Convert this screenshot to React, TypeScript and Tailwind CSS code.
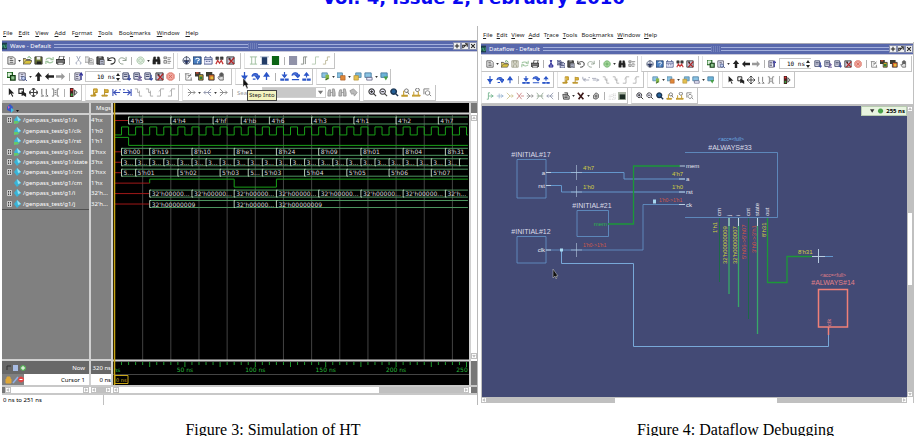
import React from 'react';

const INK = '#222222';
const BLUE = '#2a55c8';

const blueDown = <path d="M5 0v5M2.5 4.5h5L5 8zM4 9h2" fill={BLUE} stroke={BLUE} strokeWidth="1.4" />;

const ICONS: Record<string, React.ReactNode> = {
  doc: <path d="M1 1h6l2 2v6H1zM3 3h3M3 5h4M3 7h4" fill="#eee" stroke="#555" />,
  open: (
    <>
      <path d="M0 9V3h3l1 1h4v2" fill="#e8d36a" stroke="#444" />
      <path d="M0 9l3-4h7L8 9z" fill="#d8c23c" stroke="#555" strokeWidth=".8" />
      <path d="M5 2c2-2 3-1 4 1" fill="none" stroke="#3a8a3a" />
    </>
  ),
  save: (
    <>
      <path d="M1 1h8v8H1z" fill="#6d7a35" stroke="#333" />
      <path d="M3 1h4v3H3z" fill="#eee" />
      <path d="M3 6h5v3H3z" fill="#222" />
    </>
  ),
  saveOff: <path d="M1 1h8v8H1zM3 1h4v3H3zM3 9V6h4v3" fill="#e8e8dc" stroke="#9a9a86" />,
  reload: <path d="M1 4a4 3 0 0 1 7 0M6 4h3V1M9 6a4 3 0 0 1-7 0M4 6H1v3" fill="none" stroke="#9ec49e" strokeWidth="1.3" />,
  print: (
    <>
      <path d="M3 4l1-4h5L8 4" fill="#fff" stroke="#444" />
      <path d="M0 4h10v4H0z" fill="#777" stroke="#222" />
      <path d="M2 7h6v3H2z" fill="#ddd" stroke="#333" strokeWidth=".7" />
    </>
  ),
  cutOff: <path d="M3 0l3 6M7 0L4 6M3.500 6.500a1.300 1.300 0 1 0 0 2.600M6.500 6.500a1.300 1.300 0 1 1 0 2.600" fill="none" stroke="#99a0b4" />,
  cut: <path d="M4 0l2 6M6 0L4 6M4 6a1.500 1.500 0 1 0 0 3zM6 6a1.500 1.500 0 1 1 0 3z" fill="none" stroke="#34349a" strokeWidth="1.3" />,
  copyOff: <path d="M0 1h4l1 1v5H0zM4 3h4l2 2v4H4zM5 5h3M5 7h4" fill="#e6e6e6" stroke="#888" strokeWidth=".8" />,
  copy: <path d="M0 0h4l1 1v5H0zM4 3h4l2 2v5H4zM5 5h3M5 7h4M1 2h3M1 4h3" fill="#d8dcf0" stroke="#333a66" />,
  paste: (
    <>
      <path d="M1 1h7v8H1z" fill="#555" stroke="#222" />
      <path d="M3 0h3v2H3z" fill="#aaa" />
      <path d="M4 4h5v6H4z" fill="#ccd2ea" stroke="#333" strokeWidth=".8" />
      <path d="M5 6h3M5 8h3" stroke="#333" strokeWidth=".7" />
    </>
  ),
  undo: <path d="M1 1v4h4M1 5c2-4 8-4 8 0 0 3-2 4-5 4" fill="none" stroke="#333" strokeWidth="1.2" />,
  redo: <path d="M9 1v4H5M9 5C7 1 1 1 1 5c0 3 2 4 5 4" fill="none" stroke="#8a9a8a" />,
  globeOff: <path d="M5 1a4 4 0 1 0 .1 0M5 3a2 2 0 1 0 .1 0" fill="#e2f0e2" stroke="#a8c4a8" />,
  globe: <path d="M5 1a4 4 0 1 0 .1 0M5 3v4M3 5h4" fill="#a4d69a" stroke="#63a863" />,
  find: <path d="M1 9V5l1-4h2v8zM9 9V5L8 1H6v8zM4 4h2v2H4z" fill={INK} stroke={INK} strokeWidth=".6" />,
  list: <path d="M1 1h3v2H1zM1 5h3v3H1zM5 2h4M5 4h3M5 6h4M5 8h3" fill="#ddd" stroke="#666" strokeWidth=".8" />,
  clock: (
    <>
      <path d="M5 1a4 4 0 1 0 .1 0" fill="#dde3f2" stroke="#44506a" />
      <path d="M5 0v9M2 5l3 4 3-4z" fill="#334a88" stroke="#223" strokeWidth=".6" />
    </>
  ),
  ask: (
    <>
      <path d="M0 1h9v8H0z" fill="#4a7fc0" stroke="#223b66" />
      <path d="M3 4c0-2 4-2 4 0 0 1-2 1-2 2M5 7v1" fill="none" stroke="#fff" strokeWidth="1.2" />
    </>
  ),
  win: <path d="M0 2h9v7H0zM0 4h9M2 6h2M5 6h2M2 0v2M7 0v2" fill="#eef" stroke="#4c5a8c" />,
  tree: (
    <>
      <path d="M1 1h3v3H1zM6 1h3v3H6z" fill="#444" stroke="#222" strokeWidth=".6" />
      <path d="M1 9l2-4 2 3 2-3 2 4" fill="none" stroke="#c43838" strokeWidth="1.4" />
    </>
  ),
  docX: (
    <>
      <path d="M1 1h8v8H1z" fill="#c6c6d8" stroke="#333" />
      <path d="M3 3l6 6M9 2L3 9" stroke="#b02424" strokeWidth="1.500" />
      <path d="M2 2h3v3" fill="#333" />
    </>
  ),
  beam: <path d="M1 1h8M1 9h8M3 1v8M7 1v8" fill="none" stroke="#9cbc9c" />,
  navy: (
    <>
      <path d="M2 1h6v9H2z" fill="#223c66" />
      <path d="M0 1h10M0 9.500h10" stroke="#8a9cb8" strokeWidth=".8" />
    </>
  ),
  green: <path d="M1 0h8v10H1z" fill="#0c6414" />,
  block: <path d="M0 0h9v10H0z" fill="#9092a8" />,
  edge1: <path d="M1 9h3V1h4M6 1v8" fill="none" stroke="#848a84" />,
  edge2: <path d="M1 9h4V1h4" fill="none" stroke="#b4c8b0" />,
  edge3: <path d="M1 9h3V5h2V1h3" fill="none" stroke="#bcb898" />,
  dual: (
    <>
      <path d="M0 0h6v6H0z" fill="#d8f0d8" stroke="#186018" strokeWidth="1.4" />
      <path d="M4 4h5v5H4z" fill="#8ec48e" stroke="#143c14" strokeWidth="1.4" />
    </>
  ),
  docFind: (
    <>
      <path d="M1 1h7v8H1zM3 3h3M3 5h3" fill="#eef" stroke="#556" />
      <path d="M6 5a2 2 0 1 0 .1 0M8 8l2 2" fill="#c8d4f0" stroke="#3a4c88" />
    </>
  ),
  up: <path d="M5 0L1 5h2.500v5h3V5H9z" fill={INK} />,
  left: <path d="M0 5l4-4v2.500h6v3H4V9z" fill={INK} />,
  right: <path d="M10 5L6 1v2.500H0v3h6V9z" fill="#999" />,
  docUp: (
    <>
      <path d="M1 1h6v8H1zM2 3h3M2 5h3M2 7h3" fill="#eef" stroke="#556" />
      <path d="M8 9V2M6 4l2-3 2 3" fill="none" stroke="#34349a" strokeWidth="1.2" />
    </>
  ),
  run: (
    <>
      <path d="M1 1h6v7H1zM2 3h4M2 5h4" fill="#e6e6f2" stroke="#444c6c" strokeWidth="1.1" />
      <path d="M8 3v6M6 7l2 2 2-2" fill="none" stroke="#3044a0" strokeWidth="1.2" />
    </>
  ),
  runAll: (
    <>
      <path d="M1 1h6v7H1zM2 3h4M2 5h4" fill="#e6e6f2" stroke="#444c6c" strokeWidth="1.1" />
      <path d="M5 9h5M8 4v4M6 6h4" fill="none" stroke="#7060a0" strokeWidth="1.2" />
    </>
  ),
  stop: <path d="M3 1h4l2 2v4L7 9H3L1 7V3zM3 3l4 4M7 3L3 7" fill="#f0a8a0" stroke="#d86858" />,
  prof: <path d="M1 2h5M2 2v7h7M4 7l4-5M4 4h4M8 6v3" fill="none" stroke="#777" />,
  mem: (
    <>
      <path d="M0 0h6v5H0z" fill="#3c3c30" />
      <path d="M4 3h5v6H4z" fill="#d0a828" stroke="#333" />
      <path d="M5 5h3v3H5z" fill="#2c7a3c" />
      <path d="M1 1h3" stroke="#e0503a" strokeWidth="1.4" />
    </>
  ),
  memRed: (
    <>
      <path d="M0 0h7v5H0z" fill="#3c3c30" />
      <path d="M3 3h6v6H3z" fill="#d86828" stroke="#333" />
      <path d="M5 5h3v3H5z" fill="#e0c040" />
    </>
  ),
  hand: <path d="M3 9L1 6l1-1 1 1V2h1v3V1h1v4V1h1v4V2h1v5L7 9z" fill="#ddd" stroke="#555" strokeWidth=".9" />,
  stepInto: blueDown,
  stepOver: <path d="M1 5c1-4 6-4 7-1M5 4.500h5L7.500 8zM2 8h3" fill={BLUE} fillOpacity=".8" stroke={BLUE} strokeWidth="1.3" />,
  stepOut: <path d="M5 9V4M2.500 4.500h5L5 1z" fill={BLUE} stroke={BLUE} strokeWidth="1.4" />,
  stepIntoC: <path d="M5 0v4M3 3.500h4L5 6zM1 8h3v1H1zM6 8h3v1H6z" fill={BLUE} stroke={BLUE} strokeWidth="1.3" />,
  stepOverC: <path d="M1 4c1-4 6-4 7-1M5 3.500h5L7.500 6zM1 8.500h8" fill="#5c7cd8" stroke={BLUE} strokeWidth="1.3" />,
  stepOutC: <path d="M5 6V3M3 3.500h4L5 1zM1 8h3v1H1zM6 8h3v1H6z" fill={BLUE} stroke={BLUE} strokeWidth="1.3" />,
  layA: (
    <>
      <path d="M1 1h6v5H1z" fill="#8cc4e4" stroke="#5a8ca8" />
      <path d="M5 3h4v5H5z" fill="#88b848" />
      <path d="M5 9l3-2" stroke="#406828" strokeWidth="1.4" />
    </>
  ),
  layB: (
    <>
      <path d="M0 1h6v5H0z" fill="#8cc4e4" stroke="#5a8ca8" />
      <path d="M4 4h5v5H4z" fill="#e08838" stroke="#a85c28" strokeWidth=".7" />
    </>
  ),
  layC: (
    <>
      <path d="M3 1h6v5H3z" fill="#7cb8dc" stroke="#5a8ca8" />
      <path d="M1 4h5v5H1z" fill="#e4c050" stroke="#b08c30" strokeWidth=".7" />
    </>
  ),
  layD: (
    <>
      <path d="M1 1h7v5H1z" fill="#8cc4e4" stroke="#4a7ca0" />
      <path d="M3 6h6v3H3z" fill="#eef" stroke="#557" strokeWidth=".8" />
    </>
  ),
  layE: (
    <>
      <path d="M1 1h7v5H1z" fill="#6cb4d8" stroke="#4a7ca0" />
      <path d="M4 5h5L6.500 9.500z" fill="#48a048" />
    </>
  ),
  pointer: <path d="M2 0v8l2-2 2 4 1-1-2-3h3z" fill={INK} />,
  pick: (
    <>
      <path d="M1 1h5v5H1z" fill="none" stroke={INK} strokeWidth="1.2" />
      <path d="M4 3v6l2-1 3 2V6z" fill={INK} />
    </>
  ),
  pan: <path d="M5 0v10M0 5h10M3 2l2-2 2 2M3 8l2 2 2-2M2 3L0 5l2 2M8 3l2 2-2 2" fill="none" stroke="#444" strokeWidth="1.2" />,
  bars: <path d="M2 1v6M7 1v6M1 9h3M6 9h3M2 7l2 2M7 7l2 2" fill="none" stroke="#666" />,
  span: <path d="M1 1h2v8H1M9 1H7v8h2M4 3h2M4 5h2M4 7h2" fill="none" stroke="#777" />,
  light: (
    <>
      <path d="M1 0h4v10H1z" fill="#4a2020" />
      <path d="M2 1h2v2H2z" fill="#f03030" />
      <path d="M2 6h2v3H2z" fill="#30a040" />
      <path d="M6 2l3 3-3 3z" fill="#ddd" stroke="#333" />
    </>
  ),
  flagA: <path d="M4 1h4v4H5v3h2M1 8h5v1H1zM4 1v7" fill="#e0b83c" stroke="#b89024" strokeWidth="1.1" />,
  flagB: <path d="M4 1v7M4 2h4v3H4M1 8h6v1H1z" fill="#e0b83c" stroke="#b89024" strokeWidth="1.1" />,
  prev: <path d="M1 1v8M2 5h7M5 2L2 5l3 3M8 2h2" fill="none" stroke="#3a50b8" strokeWidth="1.2" />,
  next: <path d="M9 1v8M0 5h8M5 2l3 3-3 3M0 2h2" fill="none" stroke="#3a50b8" strokeWidth="1.2" />,
  prevOff: <path d="M1 1v3h4M2 5h7M4 3L2 5l2 2M8 2h2" fill="none" stroke="#9a9eb0" />,
  nextOff: <path d="M0 3h5M1 5h8M6 3l2 2-2 2" fill="none" stroke="#9a9eb0" />,
  fall: <path d="M1 1h3v4h2v4h3M6 3v3" fill="none" stroke="#aaa" />,
  rise: <path d="M1 9h4V1h4M3 4l2-2" fill="none" stroke="#aaa" />,
  merge: <path d="M1 1l4 4-4 4M1 5h8M7 3l2 2-2 2" fill="none" stroke="#888" />,
  split: <path d="M9 1L5 5l4 4M1 5h8M3 3L1 5l2 2" fill="none" stroke="#8c92a8" />,
  joinG: <path d="M1 9h2V1h2M3 5h6M6 3l3 2-3 2" fill="none" stroke="#6cb088" />,
  joinB: <path d="M1 5h8M4 2v6M6 3l3 2-3 2" fill="none" stroke="#98b4d0" />,
  joinY: <path d="M1 1l4 4-4 4M4 5h5M7 3l2 2-2 2" fill="none" stroke="#ccc088" />,
  joinR: <path d="M1 1l6 8M7 1L1 9M6 5h4" fill="none" stroke="#c87878" />,
  both: <path d="M1 1l3 4-3 4M9 1L6 5l3 4M1 5h8" fill="none" stroke="#8aa08a" />,
  erase: <path d="M1 3h5l3 2v4H2zM3 1h4v3M3 5h4M3 7h4" fill="#ccc" stroke="#333" />,
  cross: <path d="M1 1l7 8M8 1L2 9" stroke="#3c1818" strokeWidth="2" />,
  redraw: <path d="M2 8V4l3-3 3 2v4L5 9zM3 5h4M5 3v5" fill="#ddd" stroke="#444" />,
  grid: <path d="M1 9h8V1M1 6h3M5 3v4M7 2v6M2 4h1" fill="none" stroke="#bbb" strokeDasharray="1 1" />,
  dark: (
    <>
      <path d="M0 0h10v10H0z" fill="#aab4a4" />
      <path d="M2 3h7v6H2z" fill="#1c2c24" />
    </>
  ),
  zoomIn: <path d="M4 1a3 3 0 1 0 .1 0M6 6l3 3M4 2.500v3M2.500 4h3" fill="#eef" stroke="#333" strokeWidth="1.2" />,
  zoomOut: <path d="M4 1a3 3 0 1 0 .1 0M6 6l3 3M2.500 4h3" fill="#eef" stroke="#444" strokeWidth="1.2" />,
  zoomFull: <path d="M4 1a3 3 0 1 0 .1 0M6 6l3 3" fill="#246098" stroke="#1c3450" strokeWidth="1.6" />,
  zoomCur: (
    <>
      <path d="M6 1a2 2 0 1 0 .1 0M7 4l2 3" fill="#fff" stroke="#555" />
      <path d="M3 3v5M1 8h6v1H1z" fill="#e0b83c" stroke="#c09828" strokeWidth="1.2" />
    </>
  ),
  zoomCurs: (
    <>
      <path d="M6 0a2 2 0 1 0 .1 0" fill="#fff" stroke="#555" />
      <path d="M2 4v4M7 4v4M0 8h9v1H0z" fill="#e0b83c" stroke="#c09828" strokeWidth="1.1" />
    </>
  ),
  zoomArea: <path d="M1 1h6M1 1v6M5 3a2.500 2.500 0 1 0 .1 0M7 7l2 2" fill="#fff" stroke="#777" />,
  findOff: <path d="M1 9V5l1-3h2v7zM9 9V5L8 1H6v8zM4 5h2" fill="#bbb" stroke="#888" strokeWidth=".8" />,
  handOff: <path d="M1 3l4-2 4 4-3 4-1-3-2 1z" fill="#bbb" stroke="#999" />,
};

type ToolbarProps = {
  items: string;
  label: string;
  tight?: boolean;
  className?: string;
};

function Tools({ items, tight }: { items: string; tight?: boolean }) {
  return (
    <>
      {items.split(' ').map((name, i) => {
        if (name === '|') {
          return (
            <span key={i} className={`flex shrink-0 justify-center ${tight ? 'w-[6px]' : 'w-[7px]'}`}>
              <span className="h-2 w-px bg-[#b0b0b0]" />
            </span>
          );
        }
        if (name === 'v') {
          return (
            <button key={i} aria-label="More" className="flex w-[5px] shrink-0 items-center justify-center">
              <svg viewBox="0 0 4 3" className="h-[2px] w-[3px]">
                <path d="M0 0h4L2 3z" fill="#333" />
              </svg>
            </button>
          );
        }
        return (
          <button
            key={i}
            aria-label={name}
            className={`flex h-[12px] shrink-0 items-center justify-center ${tight ? 'w-[10px]' : 'w-[11px]'}`}
          >
            <svg viewBox="0 0 10 10" className={tight ? 'size-[8px]' : 'size-[9px]'}>
              {ICONS[name]}
            </svg>
          </button>
        );
      })}
    </>
  );
}

function Group({ label, className, children }: { label: string; className?: string; children: React.ReactNode }) {
  return (
    <div
      role="toolbar"
      aria-label={label}
      className={`flex h-[16px] shrink-0 items-center border-x border-b border-[#c4c4c4] border-l-[#e4e4e4] pl-[3px] ${className ?? ''}`}
    >
      {children}
    </div>
  );
}

function Toolbar({ items, label, tight, className }: ToolbarProps) {
  return (
    <Group label={label} className={className}>
      <Tools items={items} tight={tight} />
    </Group>
  );
}

function RunLength({ tight }: { tight?: boolean }) {
  return (
    <div className={`flex h-[11px] shrink-0 items-center border border-[#c8c8c8] border-r-0 ${tight ? 'mx-[2px] w-[32px]' : 'ml-px w-[36px]'}`}>
      <input
        aria-label="Run length"
        defaultValue="10 ns"
        className="w-full min-w-0 bg-transparent text-right font-['DejaVu_Sans_Mono',monospace] text-[6px] leading-none outline-none"
      />
      <svg viewBox="0 0 6 10" className="h-[10px] w-[6px] shrink-0">
        <path d="M1 4l2-3 2 3zM1 6l2 3 2-3z" fill={INK} />
      </svg>
    </div>
  );
}

function MenuBar({ items, className }: { items: string[]; className: string }) {
  return (
    <nav className={`flex h-[14px] items-center ${className}`}>
      {items.map((item) => {
        // "_" marks the mnemonic letter
        const at = item.indexOf('_');
        return (
          <button key={item} className="leading-[10px] text-[#222]">
            {item.slice(0, at)}
            <span className="underline">{item[at + 1]}</span>
            {item.slice(at + 2)}
          </button>
        );
      })}
    </nav>
  );
}

function TitleBar({ title }: { title: string }) {
  return (
    <div className="flex h-[12px] items-center border-y border-t-[#a8a8b4] border-b-[#c8c8d8] bg-[#5868ac] text-white">
      <svg viewBox="0 0 6 8" className="mr-[3px] h-[8px] w-[5px]">
        <path d="M0 0h6v8H0z" fill="#1c3c4c" />
        <path d="M1 6V3h2v3h2V2" fill="none" stroke="#48b078" />
      </svg>
      <h2 className="mr-[3px] leading-[10px]">{title}</h2>
      <div className="h-[4px] flex-1 border-y border-[#a4b0dc]" />
      <svg viewBox="0 0 10 6" className="h-[6px] w-[10px]">
        <path d="M0 1h10M0 3h10M0 5h10" stroke="#8c98c8" strokeDasharray="1 1" />
      </svg>
      <div className="h-[4px] flex-1 border-y border-[#a4b0dc]" />
      <div className="flex">
        {['M4 1v6M1 4h6', 'M1 7V3h3M2 6l4-4M4 1h3v4', 'M1.500 1.500l5 5M6.500 1.500l-5 5'].map((d, i) => (
          <button key={i} aria-label={['Add', 'Undock', 'Close'][i]} className="border border-[#8890b0] bg-[#f0f0f0]">
            <svg viewBox="0 0 8 8" className="size-[6px]">
              <path d={d} fill="none" stroke="#222" strokeWidth="1.4" />
            </svg>
          </button>
        ))}
      </div>
    </div>
  );
}

const SIGNALS = [
  { name: 'a', value: "4'hx", bus: true },
  { name: 'clk', value: "1'h0" },
  { name: 'rst', value: "1'h1" },
  { name: 'out', value: "8'hxx", bus: true },
  { name: 'state', value: "3'hx", bus: true },
  { name: 'cnt', value: "5'hxx", bus: true },
  { name: 'cm', value: "1'hx" },
  { name: 'i', value: "32'h...", bus: true },
  { name: 'j', value: "32'h...", bus: true },
];

const END = 251;
const x = (ns: number) => 1.5 + ns * 1.408;
const rowY = (row: number) => 17.5 + row * 10.44;

// [row, [start ns, label][]]
const BUSES: [number, [number, string][]][] = [
  [0, [[10, "4'h5"], [40, "4'h4"], [70, "4'hf"], [90, "4'hb"], [110, "4'h6"], [140, "4'h3"], [170, "4'h1"], [200, "4'h2"], [230, "4'h7"]]],
  [3, [[5, "8'h00"], [25, "8'h19"], [55, "8'h10"], [85, "8'he1"], [115, "8'h24"], [145, "8'h09"], [175, "8'h01"], [205, "8'h04"], [235, "8'h31"]]],
  [4, Array.from({ length: 25 }, (_, i): [number, string] => [5 + i * 10, i === 24 ? '' : '3...'])],
  [5, [[5, '5...'], [15, "5'h01"], [45, "5'h02"], [75, "5'h03"], [95, '5...'], [105, "5'h03"], [135, "5'h04"], [165, "5'h05"], [195, "5'h06"], [225, "5'h07"]]],
  [7, [25, 55, 85, 115, 145, 175, 205, 235].map((t): [number, string] => [t, t === 235 ? "32'h..." : "32'h00000..."])],
  [8, [[25, "32'h00000009"], [85, "32'h00000..."], [115, "32'h00000009"]]],
];

function Bus({ row, spans }: { row: number; spans: [number, string][] }) {
  const y = rowY(row);
  const start = x(spans[0][0]);
  return (
    <g>
      <path d={`M1.5 ${y}H${start}`} stroke="#a01818" />
      <path d={`M${start} ${y - 3.5}H${x(END)}M${start} ${y + 3.5}H${x(END)}`} stroke="#4e9660" />
      {spans.map(([t, label]) => (
        <g key={t}>
          <path d={`M${x(t) + 1} ${y - 3.5}h-1v7h1`} fill="none" stroke="#b4ccb8" />
          <text x={x(t) + 2} y={y + 2.5} fill="#d8d8d8" fontSize="6">
            {label}
          </text>
        </g>
      ))}
    </g>
  );
}

function Waves() {
  let clk = `M1.5 ${rowY(1) + 4}`;
  for (let t = 5; t < END; t += 5) {
    clk += `H${x(t)}V${rowY(1) + (t % 10 === 5 ? -4 : 4)}`;
  }
  clk += `H${x(END)}`;
  return (
    <svg className="block h-[282px] w-full bg-black font-['DejaVu_Sans',sans-serif]" fill="none">
      {Array.from({ length: 12 }, (_, i) => (
        <path key={i} d={`M${x(20 * (i + 1))} 12V257`} stroke="#424242" />
      ))}
      <path d="M0 10.500H2000" stroke="#d0d0d0" strokeWidth="2" />
      {BUSES.map(([row, spans]) => (
        <Bus key={row} row={row} spans={spans} />
      ))}
      <path d={clk} stroke="#18a018" />
      <path d={`M1.5 ${rowY(2) - 4}H${x(10)}V${rowY(2) + 4}H${x(END)}`} stroke="#18a018" />
      <path d={`M1.5 ${rowY(6)}H${x(25)}`} stroke="#a01818" />
      <path
        d={`M${x(25)} ${rowY(6)}V${rowY(6) - 4}H${x(85)}V${rowY(6) + 4}H${x(115)}V${rowY(6) - 4}H${x(END)}`}
        stroke="#18a018"
      />
      <path d="M0 257.500H2000" stroke="#d0d0d0" strokeWidth="2" />
      {Array.from({ length: 50 }, (_, i) => (
        <path key={i} d={`M${x(5 * (i + 1))} 259v${(i + 1) % 5 === 0 ? 5 : 3}`} stroke="#1c9a2c" />
      ))}
      <g fill="#28b83c" fontSize="6" textAnchor="middle">
        <text x="4" y="269">ns</text>
        {[50, 100, 150, 200].map((t) => (
          <text key={t} x={x(t)} y="269">{t} ns</text>
        ))}
        <text x="349" y="269">250</text>
      </g>
      <path d="M0 271.500H2000" stroke="#444" />
      <path d="M1.500 0V282" stroke="#c8a414" strokeWidth="1.500" />
      <path d="M2 272.500h13v8H2z" fill="#000" stroke="#c8a414" />
      <text x="3" y="279" fill="#d8b820" fontSize="5">0 ns</text>
    </svg>
  );
}

function SignalNames() {
  return (
    <div className="w-[87px] shrink-0 bg-[#808080] text-white">
      <div className="flex h-[10px] items-center pl-1">
        <svg viewBox="0 0 14 9" className="h-[9px] w-[14px]">
          <path d="M4 0l3 3-2 5-4-2V3z" fill="#3858c8" />
          <path d="M5 4l3 2-3 3z" fill="#40c0e0" />
          <path d="M2 2l2 1-2 2z" fill="#e060b0" />
          <path d="M10 6h3l-1.500 2z" fill="#111" />
        </svg>
      </div>
      <ul className="grid h-[97px] grid-rows-9 border-t-2 border-b border-t-[#d0d0d0] border-b-[#505050] pl-[3px]">
        {SIGNALS.map((s) => (
          <li key={s.name} className="flex items-center gap-px pl-px leading-[10px]">
            <svg viewBox="0 0 16 8" className="h-[8px] w-[16px] shrink-0">
              {s.bus && <path d="M1.500 1.500h4v5h-4zM2 4h3M3.500 2v4" fill="#444" stroke="#e8e8e8" strokeWidth=".8" />}
              <path d="M11 0l4 4-4 4-3-4z" fill="#38b4d8" />
              <path d="M11 0l4 4-3 1z" fill="#98e4f4" />
              {!['state', 'cnt', 'cm', 'i', 'j'].includes(s.name) && <path d="M8 5h4l1 2-5 1z" fill="#68c868" />}
            </svg>
            <span>/genpass_test/g1/{s.name}</span>
          </li>
        ))}
      </ul>
    </div>
  );
}

function ScrollArrow({ d }: { d: string }) {
  return (
    <svg viewBox="0 0 6 6" className="size-[6px] shrink-0 border border-[#c0c0c0] bg-white">
      <path d={d} fill="#c8c8c8" stroke="#999" strokeWidth=".6" />
    </svg>
  );
}

const ARROW_L = 'M4 1L1 3l3 2z';
const ARROW_R = 'M2 1l3 2-3 2z';

function WaveWindow() {
  return (
    <section className="border-r border-[#b8b8b8]">
      <MenuBar
        className="gap-[6px] pl-[3px]"
        items={['_File', '_Edit', '_View', '_Add', 'F_ormat', '_Tools', 'Boo_kmarks', '_Window', '_Help']}
      />
      <div className="pl-[2px]">
        <TitleBar title="Wave - Default" />
        <div className="flex gap-[3px] pt-px">
          <Toolbar label="Standard" items="doc v open save reload print | cutOff copyOff paste undo redo | globeOff v find list" />
          <Toolbar label="Simulate" items="clock ask win tree docX" className="pr-1" />
          <Toolbar label="Wave edit" items="beam navy green | block edge1 edge2 edge3" className="pr-[2px]" />
        </div>
        <div className="flex gap-[3px]">
          <Group label="Run" className="pr-1">
            <Tools items="dual docFind v up left right | docUp" />
            <RunLength />
            <Tools items="run runAll run docX stop | prof mem memRed hand" />
          </Group>
          <div className="relative">
            <Toolbar label="Step" items="stepInto stepOver stepOut | stepIntoC stepOverC stepOutC" />
            <div
              role="tooltip"
              className="absolute top-[21px] left-[12px] z-10 border border-[#444] bg-[#f4f4c0] px-px leading-[9px] whitespace-nowrap text-[#222]"
            >
              Step Into
            </div>
            <svg viewBox="0 0 8 12" className="absolute top-[9px] left-[7px] z-10 h-[12px] w-[8px]">
              <path d="M1 0v9l2-2 2 4 1-1-1-3h2z" fill="#111" stroke="#eee" strokeWidth=".5" />
            </svg>
          </div>
          <Toolbar label="Layout" items="layA v layB v layC layD v layE" />
        </div>
        <div className="flex gap-[3px]">
          <Toolbar label="Mode" items="pointer pick pan bars span | light" className="pr-[2px]" />
          <Toolbar label="Cursor" items="flagA flagB prev next fall fall rise rise" className="pr-px" />
          <Group label="Search">
            <Tools items="merge v split v merge |" />
            <label htmlFor="wave-search" className="w-[26px] shrink-0 pl-px text-[#999]">
              Search:
            </label>
            <div className="flex h-[11px] w-[64px] shrink-0 items-center border border-[#d0d0d0] bg-white">
              <select id="wave-search" className="h-full min-w-0 flex-1 appearance-none bg-[#c8c8c8]">
                <option></option>
              </select>
              <svg viewBox="0 0 8 8" className="mx-px size-[7px] shrink-0">
                <path d="M1 2h6L4 6z" fill="#777" />
              </svg>
            </div>
            <Tools items="findOff findOff handOff" />
          </Group>
          <Toolbar label="Zoom" items="zoomIn zoomOut zoomFull zoomCur zoomCurs zoomArea" className="pr-[2px]" />
        </div>
        <div className="flex border-t-2 border-[#c4c4c4]">
          <div className="flex w-[87px] shrink-0 flex-col bg-[#808080]">
            <SignalNames />
            <div className="mt-auto flex h-[15px] items-center border-t-2 border-[#d0d0d0] bg-[#686868] pr-1 pl-[4px] text-white">
              <svg viewBox="0 0 20 8" className="h-[8px] w-[20px]">
                <path d="M1 2h4M1 2v4" stroke="#333" fill="none" />
                <path d="M7 1h5v6H7z" fill="#a8bce4" />
                <path d="M17 1a3 3 0 1 0 .1 0" fill="#58b058" />
                <path d="M15 4h4M17 2v4" stroke="#fff" />
              </svg>
              <span className="ml-auto">Now</span>
            </div>
            <div className="flex h-[11px] items-center bg-white pr-1">
              <svg viewBox="0 0 22 11" className="h-[11px] w-[22px]">
                <path d="M0 0h22v11H0z" fill="#808080" />
                <path d="M4 5h5v4H4zM5 5V3h3v2" fill="#e0a838" stroke="#e0a838" />
                <path d="M11 9l5-6" stroke="#90b0e8" strokeWidth="1.500" />
                <path d="M19 2.500a3 3 0 1 0 .1 0" fill="#e04848" />
                <path d="M17.500 5.500h3" stroke="#fff" />
              </svg>
              <span className="ml-auto">Cursor 1</span>
            </div>
          </div>
          <div className="flex w-[24px] shrink-0 flex-col border-x-2 border-[#d0d0d0] bg-[#808080] text-white">
            <div className="h-[10px] text-right leading-[10px]">Msgs</div>
            <ul className="grid h-[96px] grid-rows-9 border-t-2 border-[#d0d0d0]">
              {SIGNALS.map((s) => (
                <li key={s.name} className="flex items-center leading-[10px]">
                  {s.value}
                </li>
              ))}
            </ul>
            <div className="mt-auto flex h-[15px] items-center justify-end border-t-2 border-[#d0d0d0] bg-[#686868] whitespace-nowrap">
              <span>320 ns</span>
            </div>
            <div className="flex h-[11px] items-center justify-end bg-white text-black">0 ns</div>
          </div>
          <div className="min-w-0 flex-1">
            <Waves />
          </div>
          <div className="flex w-[8px] shrink-0 flex-col items-center border-l-2 border-[#d0d0d0] bg-white">
            <div className="h-[10px] w-full bg-[#777]" />
            <div className="flex flex-1 flex-col items-center justify-between py-[2px]">
              <ScrollArrow d="M1 4l2-3 2 3z" />
              <ScrollArrow d="M1 2l2 3 2-3z" />
            </div>
            <div className="h-[24px] w-full bg-[#777]" />
          </div>
        </div>
        <div className="flex h-[10px] items-center gap-[2px] border-y-2 border-[#c8c8c8]">
          <div className="flex w-[87px] items-center justify-between">
            <span className="flex items-center">
              <span className="h-[6px] w-[3px] bg-[#777]" />
              <ScrollArrow d={ARROW_L} />
            </span>
            <ScrollArrow d={ARROW_R} />
          </div>
          <div className="flex w-[20px] items-center justify-between bg-[#c0c0c0]">
            <ScrollArrow d={ARROW_L} />
            <ScrollArrow d={ARROW_R} />
          </div>
          <div className="flex flex-1 items-center">
            <ScrollArrow d={ARROW_L} />
            <span className="h-[6px] w-[73%] bg-white" />
            <span className="h-[6px] flex-1 bg-[#c0c0c0]" />
            <ScrollArrow d={ARROW_R} />
          </div>
          <span className="h-[6px] w-[6px] bg-[#777]" />
        </div>
      </div>
      <footer className="flex h-[10px] items-center pl-[3px]">
        <span className="w-[101px] border-r border-[#c0c0c0] leading-[10px]">0 ns to 251 ns</span>
      </footer>
    </section>
  );
}

const WIRE = '#6496cc';
const GREEN = '#1c9838';
const YELLOW = '#d0d040';
const RED = '#d05848';

function VText({ cx, y, fill, children }: { cx: number; y: number; fill: string; children: string }) {
  return (
    <text transform={`translate(${cx} ${y}) rotate(-90)`} fill={fill} fontSize="6">
      {children}
    </text>
  );
}

function Diagram() {
  return (
    <svg
      viewBox="482 107 425 291"
      preserveAspectRatio="xMinYMin"
      className="block h-[291px] w-full bg-[#434a75] font-['Liberation_Sans',Arial,sans-serif]"
      fill="none"
    >
      <g stroke={WIRE}>
        <path d="M517 160.500h29v38.500h-29zM577 211.500h31.500v26H577zM517 237.500h29V264h-29zM685 153.500h92.500v65H685" strokeOpacity=".8" />
        <path d="M546 173.500h78v6.500h61M546 186.500h15.500v6.500H685" />
        <path d="M546 251h97v-45.500h42" strokeOpacity=".8" />
        <path d="M561.500 251v13.500h72V347.500h195V335" stroke="#78a8d8" />
        <path d="M812 257.500h21" />
      </g>
      <g stroke="#b8cce0">
        <path d="M546 173.500h5M546 186.500h5M546 251h5M679 167h6M679 180h6M679 193h6M679 205.500h6" />
        <path d="M576.500 166v15M571 173.500h11M576.500 187v11M571 193h11M576.500 244v14M571 251h11" strokeOpacity=".6" />
        <path d="M818.500 250v14M812 257.500h13" />
      </g>
      <path d="M608 225h25.500v-58H680M767.500 219v64.500H787v-26h25" stroke={GREEN} strokeWidth="1.300" />
      <path d="M719.500 219v64M748.500 219v101" stroke="#1c6848" />
      <path d="M729 219v76M738.500 219v89M757.500 219v116" stroke="#38a868" strokeWidth="1.300" />
      <path d="M729 219v8M738.500 219v8M757.500 219v8" stroke="#c8d8e8" />
      <path d="M560 249.500h3v3h-3zM653 200.500h3v4h-3z" fill="#a8d8f0" />
      <path d="M818.500 290.500h29V328h-29zM828.500 328v8" stroke="#f08078" strokeWidth="1.500" />
      <path d="M553 270v9l2-2 1 3 1-1-1-2h2z" fill="#111" stroke="#ccc" strokeWidth=".5" />

      <g fill="#dcdce8" fontSize="7" textAnchor="middle">
        <text x="531" y="158">#INITIAL#17</text>
        <text x="592" y="209">#INITIAL#21</text>
        <text x="531" y="235">#INITIAL#12</text>
        <text x="730" y="151">#ALWAYS#33</text>
      </g>
      <g fill="#e8e8f0" fontSize="6" textAnchor="end">
        <text x="545" y="176">a</text>
        <text x="545" y="189">rst</text>
        <text x="545" y="253">clk</text>
        <text x="607" y="227" fill="#28b848">mem</text>
      </g>
      <g fill="#e8e8f0" fontSize="6">
        <text x="686" y="169">mem</text>
        <text x="686" y="182">a</text>
        <text x="686" y="195">rst</text>
        <text x="686" y="208">ck</text>
      </g>
      <g fill={YELLOW} fontSize="6">
        <text x="583" y="171">4'h7</text>
        <text x="583" y="190">1'h0</text>
        <text x="672" y="177">4'h7</text>
        <text x="672" y="190">1'h0</text>
        <text x="798" y="255">8'h31</text>
      </g>
      <g fill={RED} fontSize="5">
        <text x="583" y="248">1'h0-&gt;1'h1</text>
        <text x="659" y="203">1'h0-&gt;1'h1</text>
      </g>
      <text x="731" y="142" fill="#6cb0e8" fontSize="5" textAnchor="middle">&lt;acc=&lt;full&gt;</text>
      <g fill="#e08088" textAnchor="middle">
        <text x="833" y="278" fontSize="5">&lt;acc=&lt;full&gt;</text>
        <text x="833" y="286" fontSize="7">#ALWAYS#14</text>
      </g>
      <VText cx={721} y={217} fill="#e8e8f0">cm</VText>
      <VText cx={731} y={217} fill="#e8e8f0">j</VText>
      <VText cx={740} y={217} fill="#e8e8f0">i</VText>
      <VText cx={750} y={217} fill="#e8e8f0">cnt</VText>
      <VText cx={759} y={217} fill="#e8e8f0">state</VText>
      <VText cx={769} y={217} fill="#e8e8f0">out</VText>
      <VText cx={717} y={234} fill={YELLOW}>1'h1</VText>
      <VText cx={727} y={265} fill={YELLOW}>32'h00000009</VText>
      <VText cx={737} y={265} fill={YELLOW}>32'h00000007</VText>
      <VText cx={746} y={260} fill={RED}>5'h06-&gt;5'h07</VText>
      <VText cx={756} y={254} fill={RED}>3'h0-&gt;3'h1</VText>
      <VText cx={766} y={238} fill={YELLOW}>8'h31</VText>
      <VText cx={831} y={327} fill="#e08088">clk</VText>
    </svg>
  );
}

function DataflowWindow() {
  return (
    <section className="pt-[2px]">
      <MenuBar
        className="gap-1 pl-[2px]"
        items={['_File', '_Edit', '_View', '_Add', 'T_race', '_Tools', 'Boo_kmarks', '_Window', '_Help']}
      />
      <div className="border-r border-[#c0c0c0] pt-px">
        <TitleBar title="Dataflow - Default" />
        <div className="flex gap-[3px] pt-px">
          <Toolbar
            tight
            label="Standard"
            items="doc v open saveOff reload print | cut copy paste undo redo | globe v find list"
          />
          <Toolbar tight label="Simulate" items="clock ask win tree docX" className="pr-[3px]" />
          <Group label="Run" className="pr-[2px]">
            <Tools tight items="dual docFind v up left right | docUp" />
            <RunLength tight />
            <Tools tight items="run runAll run docX stop | prof mem memRed hand" />
          </Group>
        </div>
        <div className="flex gap-[3px]">
          <Toolbar tight label="Step" items="stepInto stepOver stepOut | stepIntoC stepOverC stepOutC" className="pr-[2px]" />
          <Toolbar tight label="Cursor" items="flagA flagB prevOff nextOff fall fall rise rise" className="pr-[2px]" />
          <Toolbar tight label="Layout" items="layA v layB v layC layD v layE" className="pr-[2px]" />
          <Toolbar tight label="Mode" items="pointer pick pan bars span | light" className="pr-[2px]" />
        </div>
        <div className="flex gap-[3px]">
          <Toolbar
            tight
            label="Trace"
            items="joinG joinB joinY joinR merge both split | erase v cross v redraw | grid dark"
          />
          <Toolbar tight label="Zoom" items="zoomIn zoomOut zoomFull zoomCur zoomCurs zoomArea" className="pr-[2px]" />
        </div>
        <div className="flex border-t-2 border-l border-[#c0c0c0]">
          <div className="relative min-w-0 flex-1">
            <Diagram />
            <div className="absolute top-0 right-0 flex h-[10px] w-[46px] items-center justify-end gap-[2px] border border-[#b8ccb0] bg-[#e8f4e0] pr-px">
              <svg viewBox="0 0 16 6" className="h-[6px] w-[14px]">
                <path d="M0 1h5L2.500 5z" fill="#333" />
                <path d="M12 0a3 3 0 1 0 .1 0" fill="#48a048" />
              </svg>
              <span className="font-bold whitespace-nowrap">255 ns</span>
            </div>
          </div>
          <div className="flex w-[6px] shrink-0 flex-col items-center bg-[#c0c0c0]">
            <ScrollArrow d="M1 4l2-3 2 3z" />
            <div className="mt-[101px] h-[72px] w-[4px] bg-white" />
            <div className="flex-1" />
            <ScrollArrow d="M1 2l2 3 2-3z" />
          </div>
        </div>
        <div className="flex h-[6px] items-center bg-[#c0c0c0]">
          <ScrollArrow d={ARROW_L} />
          <div className="flex flex-1">
            <span className="h-[5px] w-[31%]" />
            <span className="h-[5px] w-[39%] bg-white" />
          </div>
          <ScrollArrow d={ARROW_R} />
          <span className="size-[6px] bg-white" />
        </div>
      </div>
    </section>
  );
}

export default function App() {
  return (
    <div className="h-screen overflow-hidden bg-white font-['Noto_Sans',sans-serif] text-[6px] leading-[10px] text-black">
      <header className="flex h-[26px] items-start justify-center pl-[27px]">
        <h1 className="-mt-[14px] font-['DejaVu_Sans',Verdana,sans-serif] text-[18px] leading-[24px] font-bold text-[#0808f0]">
          Vol. 4, Issue 2, February 2016
        </h1>
      </header>
      <main className="grid grid-cols-[478fr_433fr] gap-x-[3px] pr-[6px]">
        <WaveWindow />
        <DataflowWindow />
        <p className="mt-[15px] pl-[68px] text-center font-['Liberation_Serif',serif] text-[16px] leading-[20px]">
          Figure 3: Simulation of HT
        </p>
        <p className="mt-[15px] pl-[76px] text-center font-['Liberation_Serif',serif] text-[16px] leading-[20px]">
          Figure 4: Dataflow Debugging
        </p>
      </main>
    </div>
  );
}
